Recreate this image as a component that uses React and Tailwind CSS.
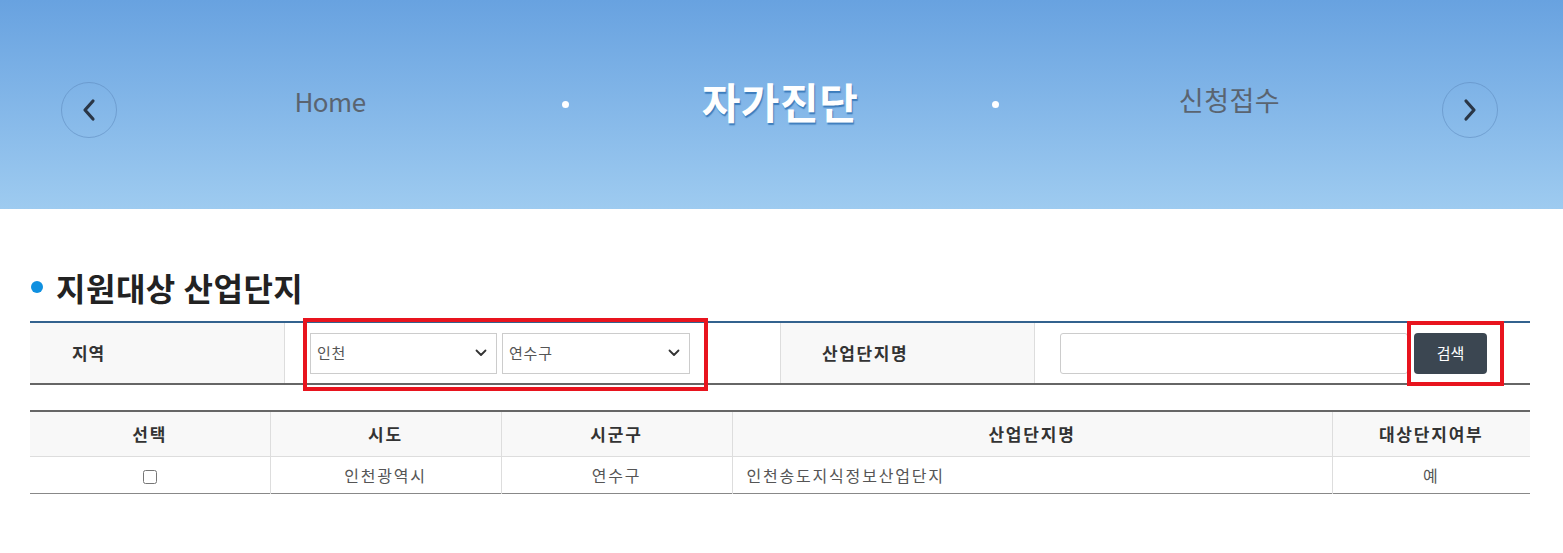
import { useState } from "react";

function CircleArrow({ dir = "left" }) {
  return (
    <button className="w-[56px] h-[56px] rounded-full border border-[#5f8cc0]/60 flex items-center justify-center">
      <svg width="16" height="24" viewBox="0 0 16 24" fill="none">
        {dir === "left" ? (
          <path d="M12 3 L4 12 L12 21" stroke="#2a3646" strokeWidth="3.2" strokeLinecap="round" strokeLinejoin="round" />
        ) : (
          <path d="M4 3 L12 12 L4 21" stroke="#2a3646" strokeWidth="3.2" strokeLinecap="round" strokeLinejoin="round" />
        )}
      </svg>
    </button>
  );
}

function Dot() {
  return (
    <div className="w-[44px] flex justify-center -mt-[10px]">
      <span className="w-[7px] h-[7px] rounded-full bg-white" />
    </div>
  );
}

function Chevron() {
  return (
    <svg className="absolute right-[10px] top-1/2 -translate-y-1/2 pointer-events-none" width="12" height="8" viewBox="0 0 12 8" fill="none">
      <path d="M1.5 1.5 L6 6 L10.5 1.5" stroke="#333" strokeWidth="1.8" strokeLinecap="round" strokeLinejoin="round" />
    </svg>
  );
}

function SelectBox({ value, width }) {
  return (
    <div className={`relative h-[41px] ${width}`}>
      <select
        defaultValue={value}
        className="appearance-none w-full h-full border border-[#cccccc] bg-white pl-[6px] text-[15px] tracking-[0.8px] text-[#555] outline-none"
      >
        <option>{value}</option>
      </select>
      <Chevron />
    </div>
  );
}

const rows = [
  { sido: "인천광역시", sigungu: "연수구", name: "인천송도지식정보산업단지", target: "예" },
];

export default function App() {
  const [checked, setChecked] = useState(false);

  return (
    <div className="font-['Noto_Sans_CJK_KR','Noto_Sans',sans-serif] bg-white min-h-[553px]">
      {/* banner */}
      <div className="h-[209px] bg-gradient-to-b from-[#68a2e0] to-[#9ecbf0] flex items-center pl-[61px] pt-[10px]">
        <CircleArrow dir="left" />
        <div className="w-[426px] flex justify-center -mt-[18px]">
          <span className="text-[26px] text-[#5a6470] tracking-[-0.5px]">Home</span>
        </div>
        <Dot />
        <div className="w-[386px] flex justify-center -mt-[18px]">
          <span className="text-[42px] font-bold text-white tracking-[0.5px] [text-shadow:1px_2px_1px_rgba(30,100,170,0.7)]">
            자가진단
          </span>
        </div>
        <Dot />
        <div className="w-[425px] flex justify-center -mt-[18px]">
          <span className="text-[27px] text-[#5a6470] tracking-[0.5px]">신청접수</span>
        </div>
        <CircleArrow dir="right" />
      </div>

      <div className="pl-[30px] w-[1530px]">
        {/* title */}
        <div className="flex items-center gap-[13px] pt-[57px] pl-[1px]">
          <span className="w-[12px] h-[12px] rounded-full bg-[#0f90e0]" />
          <h2 className="text-[32px] font-bold text-[#222] leading-[42px] tracking-[0.5px]">지원대상 산업단지</h2>
        </div>

        {/* search form */}
        <div className="mt-[13px] border-t-2 border-t-[#33628e] border-b-2 border-b-[#666] grid grid-cols-[255px_495px_255px_495px] h-[64px]">
          <div className="bg-[#f8f8f8] border-r border-[#dddddd] flex items-center pl-[42px] text-[17px] font-bold text-[#333] tracking-[0.8px]">
            지역
          </div>
          <div className="relative flex items-center gap-[5px] pl-[25px]">
            <SelectBox value="인천" width="w-[187px]" />
            <SelectBox value="연수구" width="w-[188px]" />
            <div className="absolute left-[18px] top-[-5px] w-[405px] h-[73px] border-[4px] border-[#e8141e] pointer-events-none" />
          </div>
          <div className="bg-[#f8f8f8] border-x border-[#dddddd] flex items-center pl-[41px] text-[17px] font-bold text-[#333] tracking-[1.6px]">
            산업단지명
          </div>
          <div className="relative flex items-center gap-[6px] pl-[25px]">
            <input type="text" className="w-[348px] h-[41px] border border-[#cccccc] rounded-[3px] outline-none" />
            <button className="w-[73px] h-[41px] bg-[#3b4651] rounded-[4px] text-white text-[15px]">검색</button>
            <div className="absolute left-[372px] top-[-2px] w-[97px] h-[65px] border-[4px] border-[#e8141e] pointer-events-none" />
          </div>
        </div>

        {/* result table */}
        <table className="mt-[25px] w-[1500px] border-collapse table-fixed">
          <colgroup>
            <col className="w-[240px]" />
            <col className="w-[231px]" />
            <col className="w-[231px]" />
            <col className="w-[600px]" />
            <col className="w-[198px]" />
          </colgroup>
          <thead>
            <tr className="bg-[#f8f8f8] border-t-2 border-t-[#666] h-[45px] text-[17px] text-[#333] tracking-[1.8px]">
              <th className="border-r border-b border-[#dddddd] font-bold">선택</th>
              <th className="border-x border-b border-[#dddddd] font-bold">시도</th>
              <th className="border-x border-b border-[#dddddd] font-bold">시군구</th>
              <th className="border-x border-b border-[#dddddd] font-bold">산업단지명</th>
              <th className="border-l border-b border-[#dddddd] font-bold">대상단지여부</th>
            </tr>
          </thead>
          <tbody>
            {rows.map((r) => (
              <tr key={r.name} className="h-[37px] border-b border-b-[#888] text-[16px] text-[#555] tracking-[1.8px]">
                <td className="border-r border-[#dddddd] text-center">
                  <input
                    type="checkbox"
                    checked={checked}
                    onChange={() => setChecked(!checked)}
                    className="w-[14px] h-[14px] align-middle"
                  />
                </td>
                <td className="border-x border-[#dddddd] text-center">{r.sido}</td>
                <td className="border-x border-[#dddddd] text-center">{r.sigungu}</td>
                <td className="border-x border-[#dddddd] pl-[14px]">{r.name}</td>
                <td className="border-l border-[#dddddd] text-center">{r.target}</td>
              </tr>
            ))}
          </tbody>
        </table>
      </div>
    </div>
  );
}
